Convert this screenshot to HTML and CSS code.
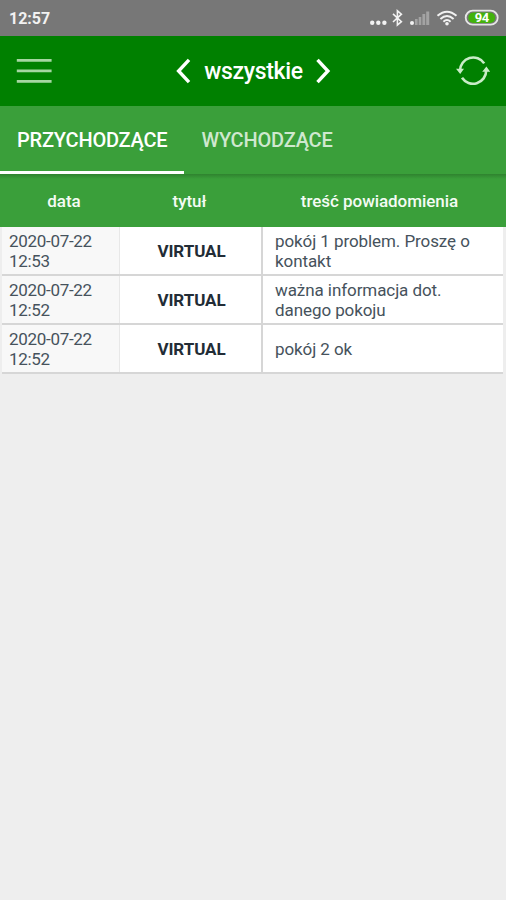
FILE: index.html
```
<!DOCTYPE html>
<html lang="pl">
<head>
    <meta charset="UTF-8">
    <meta name="viewport" content="width=device-width, initial-scale=1.0">
    <title>Powiadomienia</title>
    <link rel="stylesheet" href="styles.css">
</head>
<body>
    <div class="status-bar">
        <span class="clock">12:57</span>
        <svg class="status-icons" width="132" height="36" viewBox="0 0 132 36">
            <g fill="#f2f2f2">
                <circle cx="2.2" cy="22.7" r="2.2"/>
                <circle cx="8.3" cy="22.7" r="2.2"/>
                <circle cx="14.4" cy="22.7" r="2.2"/>
            </g>
            <path d="M23 13.8L31.4 21.6L27.4 25V10.8L31.4 14.2L23 22" fill="none" stroke="#f2f2f2" stroke-width="1.6"/>
            <g fill="#a3a3a3">
                <rect x="45" y="19" width="2.6" height="6"/>
                <rect x="48.7" y="17" width="2.6" height="8"/>
                <rect x="52.4" y="14" width="2.8" height="11"/>
                <rect x="56.2" y="11.5" width="3" height="13.5"/>
            </g>
            <circle cx="42" cy="23" r="2" fill="#f2f2f2"/>
            <g fill="none" stroke="#f2f2f2" stroke-width="2">
                <path d="M67.5 15.8Q77 7.6 86.5 15.8"/>
                <path d="M70.4 18.9Q77 13 83.6 18.9"/>
                <path d="M73.4 21.7Q77 18.4 80.6 21.7"/>
            </g>
            <circle cx="77" cy="23.7" r="1.8" fill="#f2f2f2"/>
            <rect x="95.7" y="10.7" width="32" height="14" rx="7" fill="#777" stroke="#e6e6e6" stroke-width="1.8"/>
            <rect x="98.3" y="12.5" width="26.8" height="10.5" rx="5" fill="#42b20c"/>
            <text class="battery" x="111.7" y="22.4" text-anchor="middle">94</text>
        </svg>
    </div>

    <header class="toolbar">
        <svg class="menu-icon" width="36" height="28" viewBox="0 0 36 28">
            <path d="M.8 3.4H35.6M.8 13.9H35.6M.8 24.4H35.6" stroke="#a6d6a2" stroke-width="2.8"/>
        </svg>
        <div class="filter">
            <svg width="16" height="26" viewBox="0 0 16 26">
                <path d="M14 1.8L3.6 13L14 24.2" fill="none" stroke="#fff" stroke-width="3.4"/>
            </svg>
            <span class="filter-name">wszystkie</span>
            <svg width="16" height="26" viewBox="0 0 16 26">
                <path d="M1.5 1.8L11.9 13L1.5 24.2" fill="none" stroke="#fff" stroke-width="3.4"/>
            </svg>
        </div>
        <svg class="refresh-icon" width="36" height="32" viewBox="0 0 36 32">
            <g fill="none" stroke="#c9ecc7" stroke-width="2.6">
                <path d="M5 15.5A13.2 13.2 0 0 1 29.2 8.4"/>
                <path d="M31.2 15.5A13.2 13.2 0 0 1 7 22.8"/>
            </g>
            <path d="M1 13.8H9L5.2 19ZM27.2 16.8H35.2L31.4 11.4Z" fill="#c9ecc7"/>
        </svg>
    </header>

    <nav class="tabs">
        <div class="tab active"><span class="tab-in">PRZYCHODZĄCE</span></div>
        <div class="tab"><span class="tab-out">WYCHODZĄCE</span></div>
    </nav>

    <div class="table-head">
        <span class="head-date">data</span>
        <span class="head-title">tytuł</span>
        <span class="head-text">treść powiadomienia</span>
    </div>

    <main class="table">
        <div class="row">
            <div class="date">2020-07-22<br>12:53</div>
            <div class="title">VIRTUAL</div>
            <div class="text">pokój 1 problem. Proszę o<br>kontakt</div>
        </div>
        <div class="row">
            <div class="date">2020-07-22<br>12:52</div>
            <div class="title">VIRTUAL</div>
            <div class="text">ważna informacja dot.<br>danego pokoju</div>
        </div>
        <div class="row">
            <div class="date">2020-07-22<br>12:52</div>
            <div class="title">VIRTUAL</div>
            <div class="text">pokój 2 ok</div>
        </div>
    </main>
</body>
</html>
```
FILE: styles.css
```
* {
    box-sizing: border-box;
}
body {
    margin: 0;
    min-height: 100vh;
    background-color: #eee;
    font-family: Roboto, "Noto Sans", sans-serif;
    color: #46525c;
}
svg {
    display: block;
}
.status-bar {
    display: flex;
    justify-content: space-between;
    align-items: center;
    height: 36px;
    padding: 0 4px 0 9px;
    background-color: #777;
}
.clock {
    padding-top: 1px;
    font-size: 16px;
    font-weight: 700;
    color: #f2f2f2;
}
.battery {
    font-size: 13px;
    font-weight: 700;
    fill: #fff;
    letter-spacing: -0.5px;
}
.toolbar {
    display: grid;
    grid-template-columns: 1fr auto 1fr;
    align-items: center;
    height: 70px;
    padding: 0 15px 0 16px;
    background-color: #008000;
}
.filter {
    display: flex;
    align-items: center;
    gap: 13px;
    color: #fff;
}
.filter-name {
    padding-top: 1px;
    font-size: 23px;
    font-weight: 500;
    letter-spacing: -0.35px;
}
.refresh-icon {
    justify-self: end;
}
.tabs {
    display: flex;
    height: 68px;
    background-color: #3a9f3a;
}
.tab {
    display: flex;
    align-items: center;
    padding: 3px 17px 0;
    border-bottom: 3px solid transparent;
    font-size: 20px;
    font-weight: 500;
    letter-spacing: -0.2px;
    color: #cfe8cf;
}
.tab.active {
    border-bottom-color: #fff;
    color: #fff;
}
.table-head {
    display: grid;
    grid-template-columns: 128px 123px 257px;
    align-items: center;
    height: 53px;
    background: linear-gradient(#2f832f, #3a9f3a 5px);
    font-size: 17px;
    font-weight: 500;
    letter-spacing: -0.05px;
    color: #f4fbf4;
    text-align: center;
}
.table {
    padding: 0 3px 0 2px;
}
.row {
    display: grid;
    grid-template-columns: 118px 143px 1fr;
    height: 49px;
    border-bottom: 2px solid #d6d6d6;
    background-color: #fff;
    font-size: 17px;
    line-height: 20px;
    letter-spacing: -0.08px;
}
.row > div {
    display: flex;
    flex-direction: column;
    justify-content: center;
}
.row .date {
    display: block;
    padding: 4px 0 0 7px;
    border-right: 1px solid #e8e8e8;
    background-color: #f8f8f8;
    letter-spacing: -0.3px;
}
.row .title {
    align-items: center;
    padding-left: 2px;
    border-right: 2px solid #d6d6d6;
    font-weight: 700;
    color: #222c36;
}
.row .text {
    padding: 1px 0 0 12px;
}
```
